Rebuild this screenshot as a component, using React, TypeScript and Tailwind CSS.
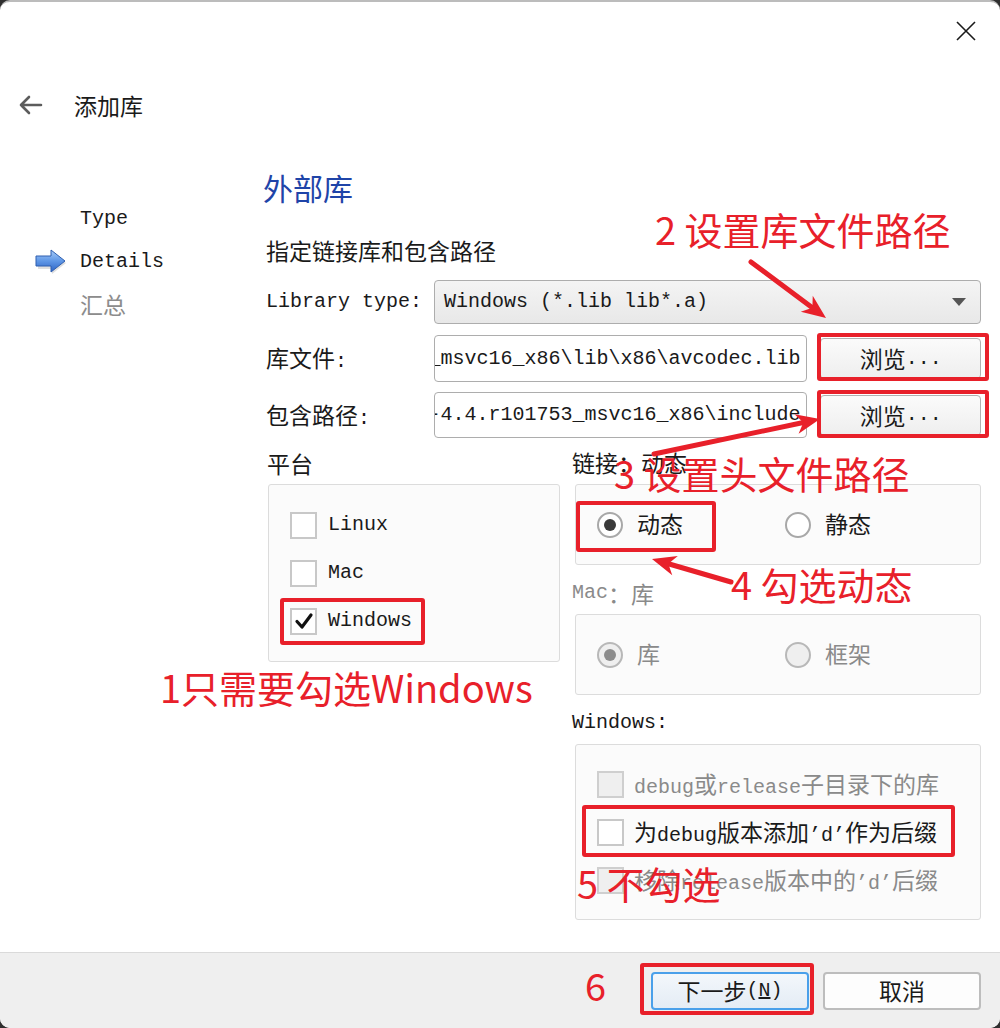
import type { ReactNode } from 'react';

const RED = '#e8202a';

// split a label into CJK and latin runs so the CJK glyphs get a wider em, like SimSun
function Mixed({ text }: { text: string }) {
  const parts = text.split(/([\u2e80-\u9fff\uff00-\uffef]+)/);
  return (
    <>
      {parts.map((p, i) =>
        i % 2 ? (
          <span key={i} className="font-['Noto_Sans_CJK_SC',sans-serif] text-[23px]">
            {p}
          </span>
        ) : (
          <span key={i}>{p}</span>
        )
      )}
    </>
  );
}

function CheckBox({ checked = false, disabled = false }: { checked?: boolean; disabled?: boolean }) {
  return (
    <span
      className={`flex h-[27px] w-[27px] shrink-0 items-center justify-center border-2 ${
        disabled ? 'border-[#cfcfcf] bg-[#efefef]' : 'border-[#c8c8c8] bg-white'
      }`}
    >
      {checked && (
        <svg width="20" height="20" viewBox="0 0 20 20">
          <path d="M3 10.5 L8 16 L17 4" fill="none" stroke="#111" strokeWidth="3.2" strokeLinecap="round" strokeLinejoin="round" />
        </svg>
      )}
    </span>
  );
}

function Radio({ on = false, disabled = false }: { on?: boolean; disabled?: boolean }) {
  return (
    <span
      className={`flex h-[26px] w-[26px] shrink-0 items-center justify-center rounded-full border-2 ${
        disabled ? 'border-[#b8b8b8] bg-[#efefef]' : 'border-[#a8a8a8] bg-white'
      }`}
    >
      {on && <span className={`h-[12px] w-[12px] rounded-full ${disabled ? 'bg-[#8c8c8c]' : 'bg-[#3a3a3a]'}`} />}
    </span>
  );
}

function CheckRow({ label, checked, disabled, gap = 'gap-[11px]' }: { label: string; checked?: boolean; disabled?: boolean; gap?: string }) {
  return (
    <div className={`flex h-[48px] items-center ${gap}`}>
      <CheckBox checked={checked} disabled={disabled} />
      <span className={disabled ? 'text-[#8a8a8a]' : 'text-[#1a1a1a]'}>
        <Mixed text={label} />
      </span>
    </div>
  );
}

function RadioItem({ label, on, disabled }: { label: string; on?: boolean; disabled?: boolean }) {
  return (
    <div className="flex w-[188px] items-center gap-[14px]">
      <Radio on={on} disabled={disabled} />
      <span className={disabled ? 'text-[#8a8a8a]' : 'text-[#1a1a1a]'}>
        <Mixed text={label} />
      </span>
    </div>
  );
}

function Group({ className, children }: { className: string; children: ReactNode }) {
  return <div className={`ml-[3px] w-[406px] rounded-[3px] border border-[#dcdcdc] bg-[#fbfbfb] ${className}`}>{children}</div>;
}

function Arrow({ x1, y1, x2, y2 }: { x1: number; y1: number; x2: number; y2: number }) {
  const a = Math.atan2(y2 - y1, x2 - x1);
  const L = 24;
  const W = 10;
  const bx = x2 - L * Math.cos(a);
  const by = y2 - L * Math.sin(a);
  const px = -Math.sin(a) * W;
  const py = Math.cos(a) * W;
  const nx = x2 - (L - 7) * Math.cos(a);
  const ny = y2 - (L - 7) * Math.sin(a);
  return (
    <g>
      <line x1={x1} y1={y1} x2={nx} y2={ny} stroke={RED} strokeWidth={5} strokeLinecap="round" />
      <polygon points={`${x2},${y2} ${bx + px},${by + py} ${nx},${ny} ${bx - px},${by - py}`} fill={RED} />
    </g>
  );
}

const LIB_PATH = 'D:\\3rdparty\\ffmpeg-4.4.r101753_msvc16_x86\\lib\\x86\\avcodec.lib';
const INC_PATH = 'D:\\3rdparty\\ffmpeg-4.4.r101753_msvc16_x86\\include';

const NOTES = [
  { text: '2 设置库文件路径', cls: 'left-[655px] top-[210px]' },
  { text: '3 设置头文件路径', cls: 'left-[614px] top-[454px]' },
  { text: '4 勾选动态', cls: 'left-[731px] top-[565px]' },
  { text: '1只需要勾选Windows', cls: 'left-[160px] top-[668px]' },
  { text: '5 不勾选', cls: 'left-[577px] top-[864px]' },
  { text: '6', cls: 'left-[585px] top-[966px]' },
];

const BOXES = [
  'left-[817px] top-[333px] h-[48px] w-[172px]',
  'left-[817px] top-[390px] h-[48px] w-[172px]',
  'left-[280px] top-[598px] h-[47px] w-[145px]',
  'left-[576px] top-[501px] h-[51px] w-[140px]',
  'left-[582px] top-[805px] h-[52px] w-[373px]',
  'left-[640px] top-[963px] h-[52px] w-[174px]',
];

export default function App() {
  return (
    <div className="relative h-[1028px] w-[1000px] overflow-hidden bg-[#2f2f2f]">
      <div className="flex h-full flex-col overflow-hidden rounded-[10px] border-t-2 border-[#bcbcbc] bg-white font-['Liberation_Mono','Noto_Sans_CJK_SC',monospace] text-[20px] text-[#1a1a1a]">
        {/* Title bar */}
        <div className="flex h-[58px] items-center justify-end pr-[23px]">
          <svg width="22" height="22" viewBox="0 0 22 22">
            <path d="M2 2 L20 20 M20 2 L2 20" stroke="#1a1a1a" strokeWidth="1.6" />
          </svg>
        </div>

        {/* Header */}
        <div className="flex h-[90px] items-center pl-[17px]">
          <svg width="26" height="26" viewBox="0 0 26 26">
            <path d="M24 13 H4 M12 5 L4 13 L12 21" fill="none" stroke="#5c5c5c" strokeWidth="2.6" strokeLinecap="round" strokeLinejoin="round" />
          </svg>
          <span className="ml-[31px] font-['Noto_Sans_CJK_SC',sans-serif] text-[23px] text-[#1a1a1a]">添加库</span>
        </div>

        {/* Body */}
        <div className="flex flex-1">
          {/* Steps */}
          <div className="w-[263px] pt-[47px]">
            <div className="flex h-[43px] items-center pl-[80px]">Type</div>
            <div className="flex h-[43px] items-center pl-[35px]">
              <svg width="34" height="28" viewBox="0 0 34 28" className="mr-[11px]">
                <defs>
                  <linearGradient id="ar" x1="0" y1="0" x2="0" y2="1">
                    <stop offset="0" stopColor="#a9cdf8" />
                    <stop offset="0.5" stopColor="#5f97e6" />
                    <stop offset="1" stopColor="#2d63c4" />
                  </linearGradient>
                </defs>
                <polygon points="3,10 17,10 17,4 31,15 17,26 17,21 3,21" fill="#c9c9c9" opacity="0.6" />
                <polygon points="1,8 16,8 16,2 30,13 16,24 16,18 1,18" fill="url(#ar)" stroke="#2f5faf" strokeWidth="1" />
              </svg>
              Details
            </div>
            <div className="flex h-[43px] items-center pl-[80px] text-[#8c8c8c]">
              <Mixed text="汇总" />
            </div>
          </div>

          {/* Main */}
          <div className="w-[718px]">
            <div className="mt-[17px] flex h-[40px] items-center font-['Noto_Sans_CJK_SC',sans-serif] text-[30px] text-[#1f44a8]">外部库</div>
            <div className="mt-[27px] flex h-[32px] items-center pl-[3px]">
              <Mixed text="指定链接库和包含路径" />
            </div>

            <div className="mt-[14px] flex h-[44px] items-center pl-[3px]">
              <span className="w-[168px]">Library type:</span>
              <div className="flex h-full flex-1 items-center rounded-[4px] border border-[#adadad] bg-gradient-to-b from-[#f4f4f4] to-[#e8e8e8] pl-[9px]">
                Windows (*.lib lib*.a)
                <svg width="14" height="8" viewBox="0 0 14 8" className="ml-auto mr-[14px]">
                  <polygon points="0,0 14,0 7,8" fill="#555" />
                </svg>
              </div>
            </div>

            <div className="mt-[11px] flex h-[47px] items-center pl-[3px]">
              <span className="w-[168px]">
                <Mixed text="库文件:" />
              </span>
              <div className="flex h-full w-[375px] items-center justify-end overflow-hidden whitespace-nowrap rounded-[4px] border border-[#adadad] bg-white pr-[6px]">
                {LIB_PATH}
              </div>
              <button className="ml-[13px] flex h-[41px] w-[161px] items-center justify-center rounded-[4px] border border-[#b0b0b0] bg-gradient-to-b from-[#fbfbfb] to-[#eeeeee]">
                <Mixed text="浏览..." />
              </button>
            </div>

            <div className="mt-[10px] flex h-[46px] items-center pl-[3px]">
              <span className="w-[168px]">
                <Mixed text="包含路径:" />
              </span>
              <div className="flex h-full w-[375px] items-center justify-end overflow-hidden whitespace-nowrap rounded-[4px] border border-[#adadad] bg-white pr-[6px]">
                {INC_PATH}
              </div>
              <button className="ml-[13px] flex h-[41px] w-[161px] items-center justify-center rounded-[4px] border border-[#b0b0b0] bg-gradient-to-b from-[#fbfbfb] to-[#eeeeee]">
                <Mixed text="浏览..." />
              </button>
            </div>

            <div className="mt-[10px] flex">
              {/* Platform */}
              <div className="w-[297px]">
                <div className="flex h-[30px] items-center pl-[4px]">
                  <Mixed text="平台" />
                </div>
                <div className="ml-[5px] mt-[6px] h-[178px] w-[292px] rounded-[3px] border border-[#dcdcdc] bg-[#fbfbfb] pl-[21px] pt-[16px]">
                  <CheckRow label="Linux" />
                  <CheckRow label="Mac" />
                  <CheckRow label="Windows" checked />
                </div>
              </div>

              {/* Link options */}
              <div className="ml-[12px] w-[409px]">
                <div className="flex h-[28px] items-center">
                  <Mixed text="链接：动态" />
                </div>
                <Group className="mt-[8px] flex h-[81px] items-center pl-[21px]">
                  <RadioItem label="动态" on />
                  <RadioItem label="静态" />
                </Group>

                <div className="mt-[13px] flex h-[30px] items-center text-[#8a8a8a]">
                  <Mixed text="Mac：库" />
                </div>
                <Group className="mt-[6px] flex h-[81px] items-center pl-[21px]">
                  <RadioItem label="库" on disabled />
                  <RadioItem label="框架" disabled />
                </Group>

                <div className="mt-[13px] flex h-[30px] items-center">Windows:</div>
                <Group className="mt-[6px] h-[176px] pl-[21px] pt-[15px]">
                  <CheckRow label="debug或release子目录下的库" disabled gap="gap-[10px]" />
                  <CheckRow label="为debug版本添加’d’作为后缀" gap="gap-[10px]" />
                  <CheckRow label="移除release版本中的’d’后缀" disabled gap="gap-[10px]" />
                </Group>
              </div>
            </div>
          </div>
        </div>

        {/* Footer */}
        <div className="flex h-[76px] items-center justify-end gap-[14px] border-t border-[#dadada] bg-[#efefef] pr-[19px]">
          <button className="flex h-[38px] w-[158px] items-center justify-center rounded-[4px] border-2 border-[#4aa0ea] bg-gradient-to-b from-[#f3f7fb] to-[#e4ecf5]">
            <Mixed text="下一步" />
            <span>
              (<span className="underline">N</span>)
            </span>
          </button>
          <button className="flex h-[38px] w-[158px] items-center justify-center rounded-[4px] border-2 border-[#bdbdbd] bg-[#fdfdfd]">
            <Mixed text="取消" />
          </button>
        </div>
      </div>

      {/* Annotations drawn over the dialog */}
      <div className="pointer-events-none absolute inset-0">
        {BOXES.map((b) => (
          <div key={b} className={`absolute rounded-[3px] border-4 border-[#e8202a] ${b}`} />
        ))}
        <svg width="1000" height="1028" className="absolute left-0 top-0">
          <Arrow x1={751} y1={262} x2={826} y2={318} />
          <Arrow x1={654} y1={454} x2={820} y2={419} />
          <Arrow x1={731} y1={582} x2={652} y2={559} />
        </svg>
        {NOTES.map((n) => (
          <div
            key={n.text}
            className={`absolute whitespace-nowrap font-['Noto_Sans_CJK_SC',sans-serif] text-[38px] leading-none text-[#e8202a] ${n.cls}`}
          >
            {n.text}
          </div>
        ))}
      </div>
    </div>
  );
}
